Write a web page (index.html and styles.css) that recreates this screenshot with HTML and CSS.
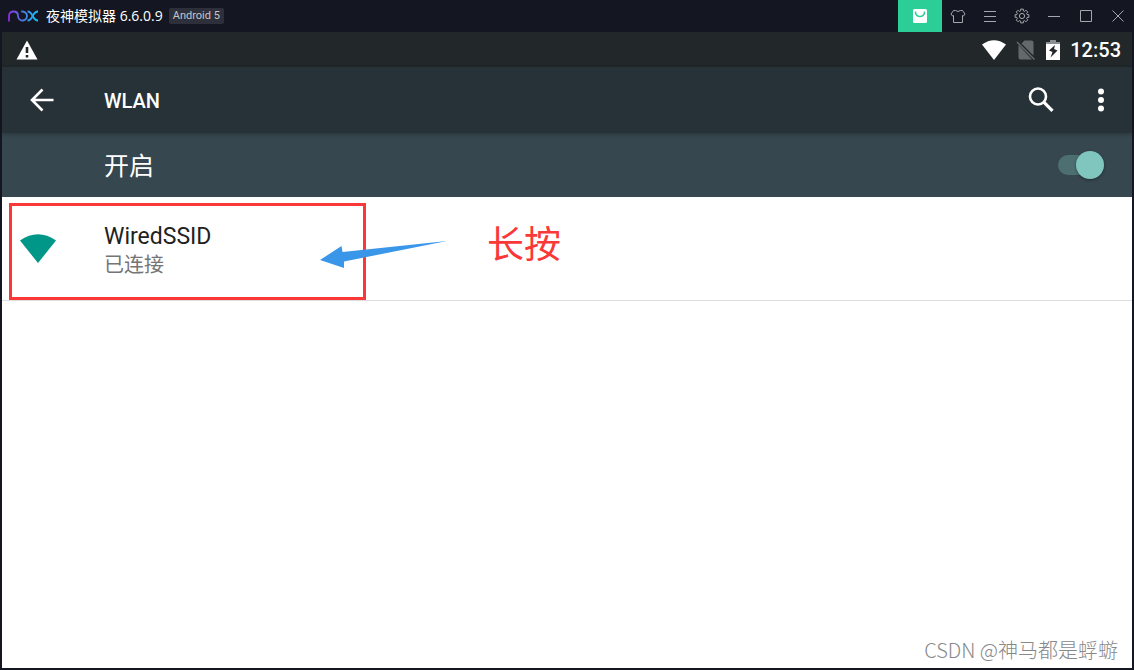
FILE: index.html
```
<!DOCTYPE html>
<html lang="zh-CN">
<head>
    <meta charset="UTF-8">
    <meta name="viewport" content="width=device-width, initial-scale=1.0">
    <title>夜神模拟器</title>
    <link rel="stylesheet" href="styles.css">
</head>
<body>
    <header class="titlebar">
        <svg class="logo" width="30" height="14" viewBox="0 0 30 14" aria-hidden="true">
            <defs>
                <linearGradient id="nox" gradientUnits="userSpaceOnUse" x1="0" y1="0" x2="30" y2="0">
                    <stop offset="0" stop-color="#8a2be2"/>
                    <stop offset="0.5" stop-color="#4f7be8"/>
                    <stop offset="1" stop-color="#12c4f5"/>
                </linearGradient>
            </defs>
            <g fill="none" stroke="url(#nox)" stroke-width="1.8">
                <path d="M1 12.500V7Q1 2.500 5.500 2.500T10 7A4.500 4.500 0 1 0 13.200 2.700"/>
                <path d="M19.500 2.500Q22.500 2.500 24.700 7T30 11.500"/>
                <path d="M30 2.500Q26.900 2.500 24.700 7T19.500 11.500"/>
            </g>
        </svg>
        <span class="app-name">夜神模拟器 6.6.0.9</span>
        <span class="version">Android 5</span>
        <div class="window-buttons">
            <button class="store" aria-label="应用中心">
                <svg width="16" height="16" viewBox="0 0 16 16"><rect x="1" y="1" width="14" height="14" rx="1.500" fill="#fff"/><path d="M3.500 3.500V5Q4.500 8.500 8 8.500T12.500 5V3.500" fill="none" stroke="#2ace96" stroke-width="1.500"/></svg>
            </button>
            <button aria-label="主题">
                <svg width="16" height="16" viewBox="0 0 16 16"><path d="M5.500 2.500Q8 4.500 10.500 2.500L12.500 2.500L15 6L13.500 8L12.500 7.500V14.500H3.500V7.500L2.500 8L1 6L3.500 2.500Z"/></svg>
            </button>
            <button aria-label="菜单">
                <svg width="16" height="16" viewBox="0 0 16 16"><path d="M2 3.500H14M2 8.500H14M2 13.500H14"/></svg>
            </button>
            <button aria-label="设置">
                <svg width="16" height="16" viewBox="0 0 16 16"><path stroke-linejoin="round" d="M13.100 6.600L14.900 6.700V9.300L13.100 9.400L12.600 10.700L13.800 11.900L11.900 13.800L10.700 12.600L9.400 13.100L9.300 14.900H6.700L6.600 13.100L5.300 12.600L4.100 13.800L2.200 11.900L3.400 10.700L2.900 9.400L1.100 9.300V6.700L2.900 6.600L3.400 5.300L2.200 4.100L4.100 2.200L5.300 3.400L6.600 2.900L6.700 1.100H9.300L9.400 2.900L10.700 3.400L11.900 2.200L13.800 4.100L12.600 5.300Z"/><circle cx="8" cy="8" r="2.600"/></svg>
            </button>
            <button aria-label="最小化">
                <svg width="16" height="16" viewBox="0 0 16 16"><path d="M2 8.500H14"/></svg>
            </button>
            <button aria-label="最大化">
                <svg width="16" height="16" viewBox="0 0 16 16"><path d="M2.500 2.500H13.500V13.500H2.500Z"/></svg>
            </button>
            <button aria-label="关闭">
                <svg width="16" height="16" viewBox="0 0 16 16"><path d="M2.500 2.500L13.500 13.500M13.500 2.500L2.500 13.500"/></svg>
            </button>
        </div>
    </header>

    <main class="screen">
        <div class="status-bar">
            <svg width="22" height="20" viewBox="0 0 22 20"><path d="M11 0.500L21.500 19.500H0.500Z" fill="#fff"/><path d="M11 7V13M11 15V17.500" stroke="#22282a" stroke-width="2.600"/></svg>
            <div class="status-icons">
                <svg width="24" height="20" viewBox="0 0 24 20"><path d="M0 4.500Q12-4 24 4.500L12 20Z" fill="#fff"/></svg>
                <svg width="20" height="20" viewBox="0 0 20 20"><path d="M8.500 0.500H15.500Q17.500 0.500 17.500 2.500V15.600L5.500 3.500ZM2.500 5L16 19.500H4.500Q2.500 19.500 2.500 17.500Z" fill="#64696b"/><path d="M1 2L18.500 19.500" stroke="#64696b" stroke-width="1.500"/></svg>
                <svg width="14" height="20" viewBox="0 0 14 20"><path d="M4 0H10V2H14V5H0V2H4Z" fill="#8b9092"/><path d="M0 4H14V20H0Z" fill="#fff"/><path d="M9 5L3 10.500L6.500 12L4.500 17.500L11.500 10.500L8 9Z" fill="#22282a"/></svg>
                <time class="clock">12:53</time>
            </div>
        </div>

        <div class="toolbar">
            <button class="icon-button" aria-label="返回">
                <svg width="24" height="24" viewBox="0 0 24 24"><path d="M23.500 12H2M12.500 1.500L2 12L12.500 22.500" fill="none" stroke="#fff" stroke-width="2.600"/></svg>
            </button>
            <h1>WLAN</h1>
            <button class="icon-button" aria-label="搜索">
                <svg width="26" height="26" viewBox="0 0 26 26"><circle cx="10" cy="9.500" r="8" fill="none" stroke="#fff" stroke-width="2.600"/><path d="M15.800 15.200L24.500 23.900" stroke="#fff" stroke-width="3.200"/></svg>
            </button>
            <button class="icon-button more" aria-label="更多选项">
                <svg width="6" height="24" viewBox="0 0 6 24" fill="#fff"><circle cx="3" cy="3.500" r="3"/><circle cx="3" cy="12" r="3"/><circle cx="3" cy="20.500" r="3"/></svg>
            </button>
        </div>

        <div class="switch-bar">
            <label for="wlan">开启</label>
            <input type="checkbox" id="wlan" class="switch" checked>
        </div>

        <ul class="networks">
            <li class="network">
                <svg class="signal" width="36" height="30" viewBox="0 0 36 30"><path d="M0 6.500Q18-6 36 6.500L18 29Z" fill="#009688"/></svg>
                <div class="info">
                    <div class="ssid">WiredSSID</div>
                    <div class="state">已连接</div>
                </div>
                <!-- 操作标注 -->
                <div class="mark-box"></div>
                <svg class="mark-arrow" width="128" height="28" viewBox="0 0 128 28"><path d="M0 20L21.500 6L22.500 12L127 1L24 21.500V28Z" fill="#3a96e8"/></svg>
                <span class="mark-text">长按</span>
            </li>
        </ul>
        <div class="watermark">CSDN @神马都是蜉蝣</div>
    </main>
</body>
</html>
```
FILE: styles.css
```
* {
    box-sizing: border-box;
}
body {
    margin: 0;
    min-height: 100vh;
    display: flex;
    flex-direction: column;
    background: #141721;
    font-family: Roboto, "Noto Sans CJK SC", sans-serif;
}
svg {
    display: block;
    flex: none;
}
button {
    display: flex;
    align-items: center;
    justify-content: center;
    padding: 0;
    border: none;
    background: none;
    cursor: pointer;
}

/* 窗口标题栏 */
.titlebar {
    display: flex;
    align-items: center;
    height: 32px;
    padding-left: 8px;
}
.app-name {
    margin-left: 8px;
    font-family: "Open Sans", "Noto Sans CJK SC", sans-serif;
    font-size: 14px;
    line-height: 20px;
    color: #fff;
}
.version {
    margin-left: 6px;
    padding: 0 4px;
    border-radius: 2px;
    background: #2d303a;
    font-size: 11px;
    line-height: 16px;
    color: #c4c6ca;
}
.window-buttons {
    display: flex;
    align-self: stretch;
    margin-left: auto;
}
.window-buttons button {
    width: 32px;
}
.window-buttons .store {
    width: 44px;
    background: #2ace96;
}
.window-buttons svg {
    fill: none;
    stroke: #a5a7ac;
    stroke-width: 1;
}
.window-buttons .store svg {
    stroke: none;
}

/* 安卓界面 */
.screen {
    position: relative;
    flex: 1;
    margin: 0 2px 2px;
    background: #fff;
}
.status-bar {
    display: flex;
    align-items: center;
    justify-content: space-between;
    height: 35px;
    padding: 0 12px 0 14px;
    background: #22282a;
}
.status-icons {
    display: flex;
    align-items: center;
    gap: 10px;
}
.clock {
    font-size: 20px;
    font-weight: 500;
    line-height: 24px;
    color: #fff;
}
.status-icons .clock {
    margin-right: -1px;
}
.toolbar {
    position: relative;
    display: flex;
    align-items: center;
    height: 66px;
    padding: 0 15px 0 16px;
    background: #273238;
    box-shadow: 0 1px 4px rgba(0, 0, 0, 0.3);
}
.toolbar h1 {
    flex: 1;
    margin: 0 0 0 38px;
    padding-top: 2px;
    font-size: 20px;
    font-weight: 500;
    line-height: 24px;
    color: #fff;
}
.icon-button {
    width: 48px;
    height: 48px;
}
.more {
    margin-left: 12px;
    margin-right: -8px;
}
.switch-bar {
    display: flex;
    align-items: center;
    justify-content: space-between;
    height: 64px;
    padding: 0 28px 0 102px;
    background: #37474f;
    font-size: 25px;
    line-height: 36px;
    color: #fff;
}
.switch-bar label {
    padding-top: 4px;
}
.switch {
    appearance: none;
    display: flex;
    align-items: center;
    justify-content: flex-end;
    width: 46px;
    height: 20px;
    margin: 0;
    border-radius: 10px;
    background: #4d6f72;
    cursor: pointer;
}
.switch::before {
    content: "";
    width: 28px;
    height: 28px;
    border-radius: 50%;
    background: #80c6bf;
    box-shadow: 0 1px 3px rgba(0, 0, 0, 0.4);
}
.networks {
    margin: 0;
    padding: 0;
    list-style: none;
}
.network {
    position: relative;
    display: flex;
    align-items: center;
    gap: 48px;
    height: 104px;
    padding-left: 18px;
    border-bottom: 1px solid #dedede;
}
.info {
    padding-top: 4px;
}
.ssid {
    font-size: 23px;
    line-height: 28px;
    color: #212121;
}
.state {
    font-size: 20px;
    line-height: 28px;
    color: #757575;
}

/* 标注 */
.mark-box {
    position: absolute;
    left: 7px;
    top: 6px;
    width: 357px;
    height: 97px;
    border: 3px solid #fb3838;
}
.mark-arrow {
    position: absolute;
    left: 318px;
    top: 43px;
}
.mark-text {
    position: absolute;
    left: 485px;
    top: 22px;
    font-size: 37px;
    line-height: 54px;
    color: #fb3838;
}
.watermark {
    position: absolute;
    right: 14px;
    bottom: 4px;
    font-family: "Noto Sans CJK SC", sans-serif;
    font-size: 20px;
    font-weight: 300;
    line-height: 28px;
    color: #888;
}
```
